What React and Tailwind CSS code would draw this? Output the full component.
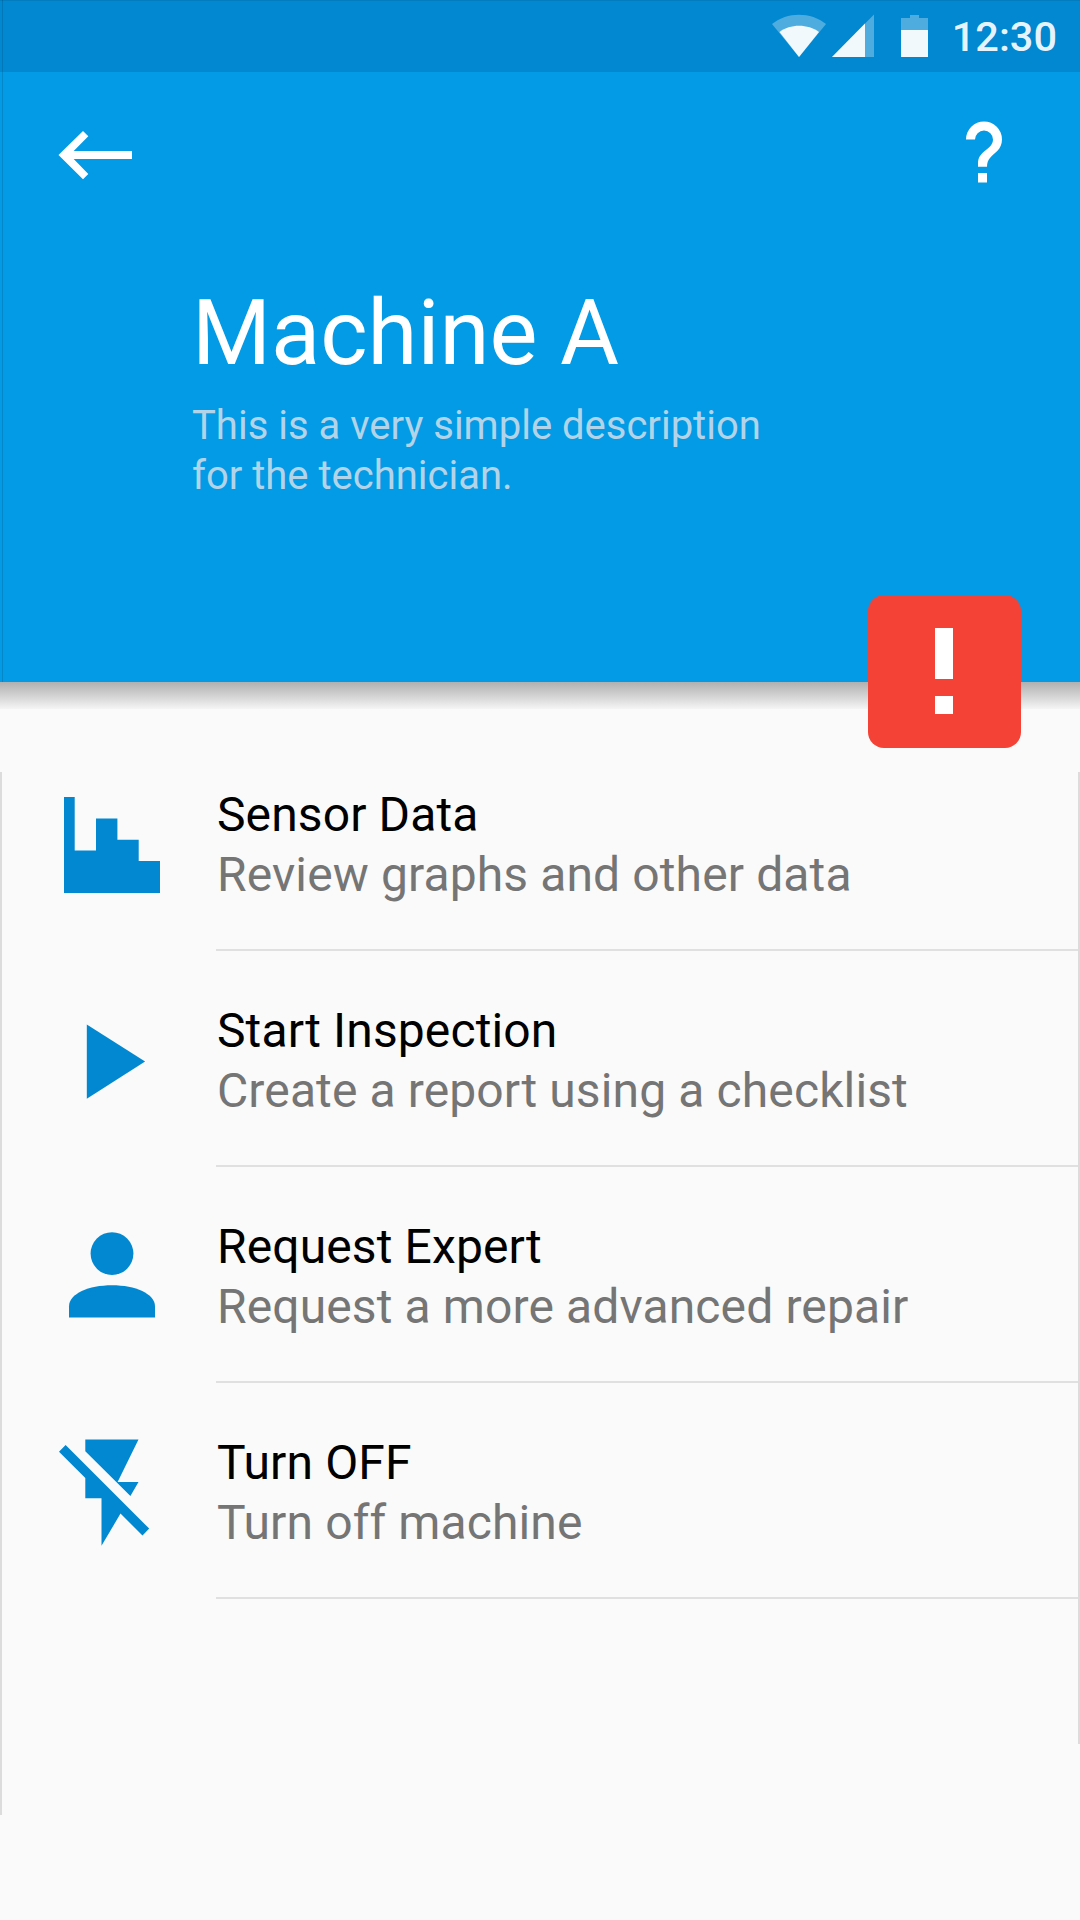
const rows = [
  { title: 'Sensor Data', detail: 'Review graphs and other data', Icon: ChartIcon },
  { title: 'Start Inspection', detail: 'Create a report using a checklist', Icon: PlayIcon },
  { title: 'Request Expert', detail: 'Request a more advanced repair', Icon: PersonIcon },
  { title: 'Turn OFF', detail: 'Turn off machine', Icon: FlashOffIcon },
];

// Row icons share one 216x216 canvas that fills the row's leading cell.
function RowIcon({ children }) {
  return (
    <svg viewBox="0 0 216 216" className="h-[216px] w-[216px] shrink-0 fill-[#0288d1]" aria-hidden="true">
      {children}
    </svg>
  );
}

function ChartIcon() {
  return (
    <RowIcon>
      <path d="M64 62h10.7v53.4H96V83.4h21.4v21.3h21.3V126H160v32H64z" />
    </RowIcon>
  );
}

function PlayIcon() {
  return (
    <RowIcon>
      <path d="M86.8 73.5v74.3l58.3-37.2z" />
    </RowIcon>
  );
}

function PersonIcon() {
  return (
    <RowIcon>
      <circle cx="112" cy="86.6" r="21.4" />
      <path d="M69 150.6v-11.2c0-12.6 19.6-21.1 43-21.1s43 8.5 43 21.1v11.2z" />
    </RowIcon>
  );
}

function FlashOffIcon() {
  return (
    <RowIcon>
      <path d="M85.3 56.500h53.200L117.600 99h20.900l-8.100 13.900L85.300 68.200z" />
      <path d="M65.600 62L59 68.800l26.300 26.300v20.200h16.200v47.500l19-32.200 22 21.800 6.700-6.800z" />
    </RowIcon>
  );
}

function StatusBar() {
  return (
    <div className="flex h-[72px] items-start justify-between border-t border-[#027cbf] bg-[#0288d1] pl-[772px] pr-[23px] text-white/93">
      <svg viewBox="0 0 160 45" className="mt-[13px] h-[45px] w-[160px] shrink-0 fill-current" aria-hidden="true">
        <path opacity=".33" d="M0 10C15-2.500 39-2.500 54 10L27 43z" />
        <path d="M7.500 18C18 9.700 36 9.700 47 18L27 43z" />
        <path opacity=".33" d="M102 .5V43H60z" />
        <path d="M93 9.500V43H60z" />
        <path opacity=".33" d="M138 1h9v3h9v39h-27V4h9z" />
        <path d="M129 16h27v27h-27z" />
      </svg>
      <span className="mt-[12px] text-[41.5px] leading-[48px] font-medium">12:30</span>
    </div>
  );
}

function Header() {
  return (
    <header className="relative h-[610px] bg-[#039be5]">
      <div className="flex h-[208px] items-start justify-between pl-[58px] pr-[78px]">
        <svg viewBox="0 0 74 50" className="mt-[58px] h-[50px] w-[74px] fill-white" aria-label="Back">
          <path d="M25 .9l5.300 5.300L15.700 20.900H74v8.200H15.700l14.600 14.800-5.300 5.300L.5 25z" />
        </svg>
        <svg viewBox="0 0 36 62" className="mt-[49px] h-[62px] w-[36px] fill-white" aria-label="Help">
          <path d="M0 18.500a18 18 0 0 1 36 0c0 4.500-1.800 8.500-4.500 11.300-6 5.500-10.500 8.500-10.500 16H12v-3.500c0-6 3-9 7-12.500 4.500-3.300 8-6.500 8-11.300a9 9 0 0 0-18 0z" />
          <path d="M12 52h9v9.500h-9z" />
        </svg>
      </div>
      <div className="pl-[192px]">
        <h1 className="text-[90.500px] leading-[106px] text-white">Machine A</h1>
        <p className="mt-[15px] w-[620px] text-[40px] leading-[50px] text-[#b3d4e8]">
          This is a very simple description
          <br />
          for the technician.
        </p>
      </div>
      <div className="absolute inset-x-0 top-full h-[27px] bg-linear-to-b from-[#b0b0b0] to-[#f5f5f5]" />
      <div className="absolute left-[868px] top-[523px] flex h-[153px] w-[153px] flex-col items-center gap-[17px] rounded-[16px] bg-[#f44336] pr-[2px] pt-[33px]">
        <span className="h-[51px] w-[18px] bg-white" />
        <span className="h-[18px] w-[18px] bg-white" />
      </div>
    </header>
  );
}

function Row({ title, detail, Icon }) {
  return (
    <li className="flex h-[216px]">
      <Icon />
      <div className="flex-1 border-b-2 border-[#e0e0e0] pl-px pt-[50px] text-[48px] leading-[60px] tracking-[0.12px]">
        <div className="text-black">{title}</div>
        <div className="text-[#757575]">{detail}</div>
      </div>
    </li>
  );
}

// Hairlines along the screen's outer edges.
function EdgeLines() {
  return (
    <>
      <span className="absolute left-[2px] top-0 h-[682px] w-px bg-black/12" />
      <span className="absolute left-0 top-[772px] h-[1043px] w-[2px] bg-[#dcdcdc]" />
      <span className="absolute right-0 top-[772px] h-[972px] w-[2px] bg-[#dcdcdc]" />
    </>
  );
}

export default function App() {
  return (
    <main className="relative h-[1920px] w-[1080px] overflow-hidden bg-[#fafafa] font-['Roboto',sans-serif]">
      <StatusBar />
      <Header />
      <ul className="pt-[53px]">
        {rows.map((row) => (
          <Row key={row.title} {...row} />
        ))}
      </ul>
      <EdgeLines />
    </main>
  );
}
